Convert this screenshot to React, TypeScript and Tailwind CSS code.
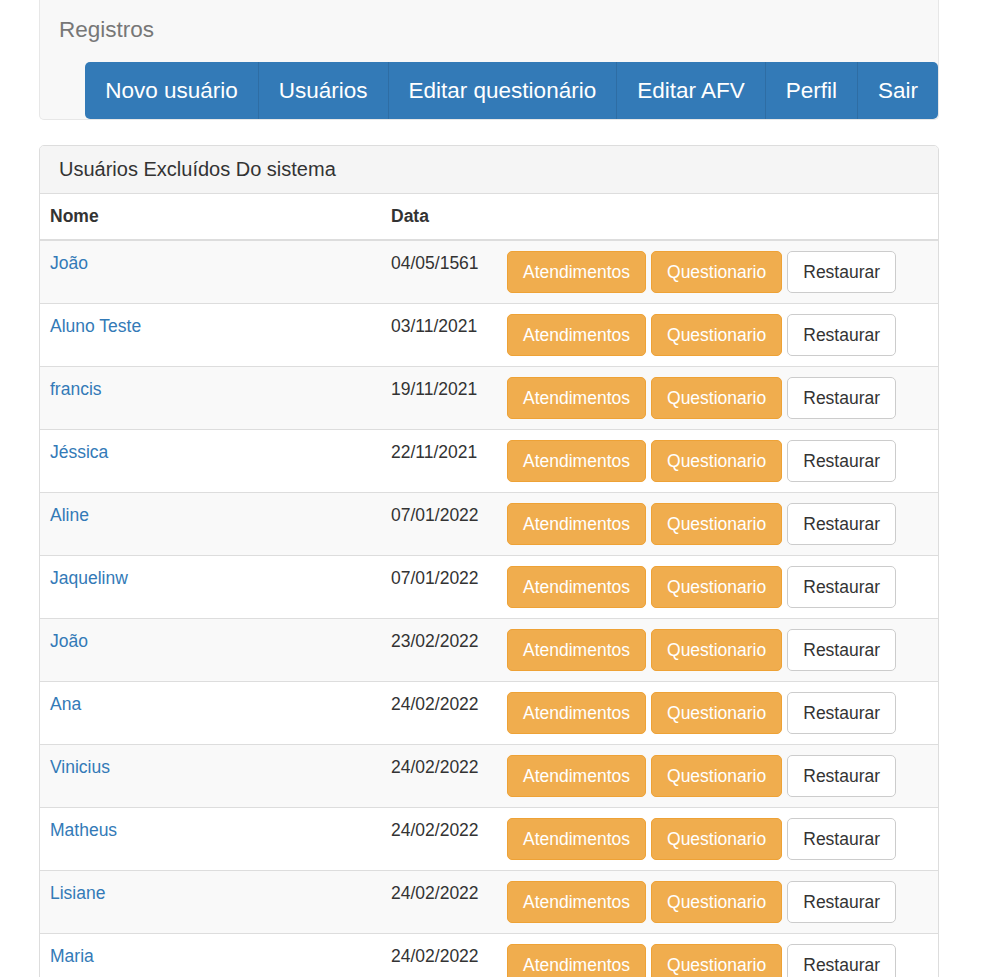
import React from "react";

const navItems = ["Novo usuário", "Usuários", "Editar questionário", "Editar AFV", "Perfil", "Sair"];

const usuarios = [
  { nome: "João", data: "04/05/1561" },
  { nome: "Aluno Teste", data: "03/11/2021" },
  { nome: "francis", data: "19/11/2021" },
  { nome: "Jéssica", data: "22/11/2021" },
  { nome: "Aline", data: "07/01/2022" },
  { nome: "Jaquelinw", data: "07/01/2022" },
  { nome: "João", data: "23/02/2022" },
  { nome: "Ana", data: "24/02/2022" },
  { nome: "Vinicius", data: "24/02/2022" },
  { nome: "Matheus", data: "24/02/2022" },
  { nome: "Lisiane", data: "24/02/2022" },
  { nome: "Maria", data: "24/02/2022" },
];

export default function App() {
  return (
    <div className="min-h-screen bg-white font-['Liberation_Sans',Arial,sans-serif] text-[17.5px] leading-[25px] text-[#333]">
      <div className="ml-[39px] w-[900px]">
        {/* navbar */}
        <div className="mb-[25px] flex flex-col rounded-b-[5px] border-x border-b border-[#e7e7e7] bg-[#f8f8f8]">
          <div className="flex h-[62px] items-center pb-[3px] pl-[19px] text-[22.5px] text-[#777]">Registros</div>
          <div className="flex justify-end">
            <ul className="flex h-[57px] overflow-hidden rounded-[5px] bg-[#337ab7] text-[22.5px] text-white">
              {navItems.map((item, i) => (
                <li
                  key={item}
                  className={`flex items-center px-5 ${i > 0 ? "border-l border-[#2e6da4]" : ""}`}
                >
                  {item}
                </li>
              ))}
            </ul>
          </div>
        </div>

        {/* panel */}
        <div className="overflow-hidden rounded-t-[5px] border border-[#ddd]">
          <div className="flex h-[48px] items-center border-b border-[#ddd] bg-[#f5f5f5] px-[19px] text-[20px] text-[#333]">
            Usuários Excluídos Do sistema
          </div>
          <table className="w-full border-collapse">
            <thead>
              <tr className="border-b-[2.5px] border-[#ddd]">
                <th className="w-[341px] px-[10px] py-[10px] text-left font-bold">Nome</th>
                <th className="w-[116px] px-[10px] py-[10px] text-left font-bold">Data</th>
                <th className="px-[10px] py-[10px]"></th>
              </tr>
            </thead>
            <tbody>
              {usuarios.map((u, i) => (
                <tr key={i} className={`border-t border-[#ddd] ${i % 2 === 0 ? "bg-[#f9f9f9]" : "bg-white"}`}>
                  <td className="px-[10px] py-[10px] align-top">
                    <a className="text-[#337ab7]">{u.nome}</a>
                  </td>
                  <td className="px-[10px] py-[10px] align-top">{u.data}</td>
                  <td className="px-[10px] py-[10px] align-top">
                    <div className="flex gap-[5px]">
                      <button className="h-[42px] rounded-[5px] border border-[#eea236] bg-[#f0ad4e] px-[15px] text-white">
                        Atendimentos
                      </button>
                      <button className="h-[42px] rounded-[5px] border border-[#eea236] bg-[#f0ad4e] px-[15px] text-white">
                        Questionario
                      </button>
                      <button className="h-[42px] rounded-[5px] border border-[#ccc] bg-white px-[15px] text-[#333]">
                        Restaurar
                      </button>
                    </div>
                  </td>
                </tr>
              ))}
            </tbody>
          </table>
        </div>
      </div>
    </div>
  );
}
